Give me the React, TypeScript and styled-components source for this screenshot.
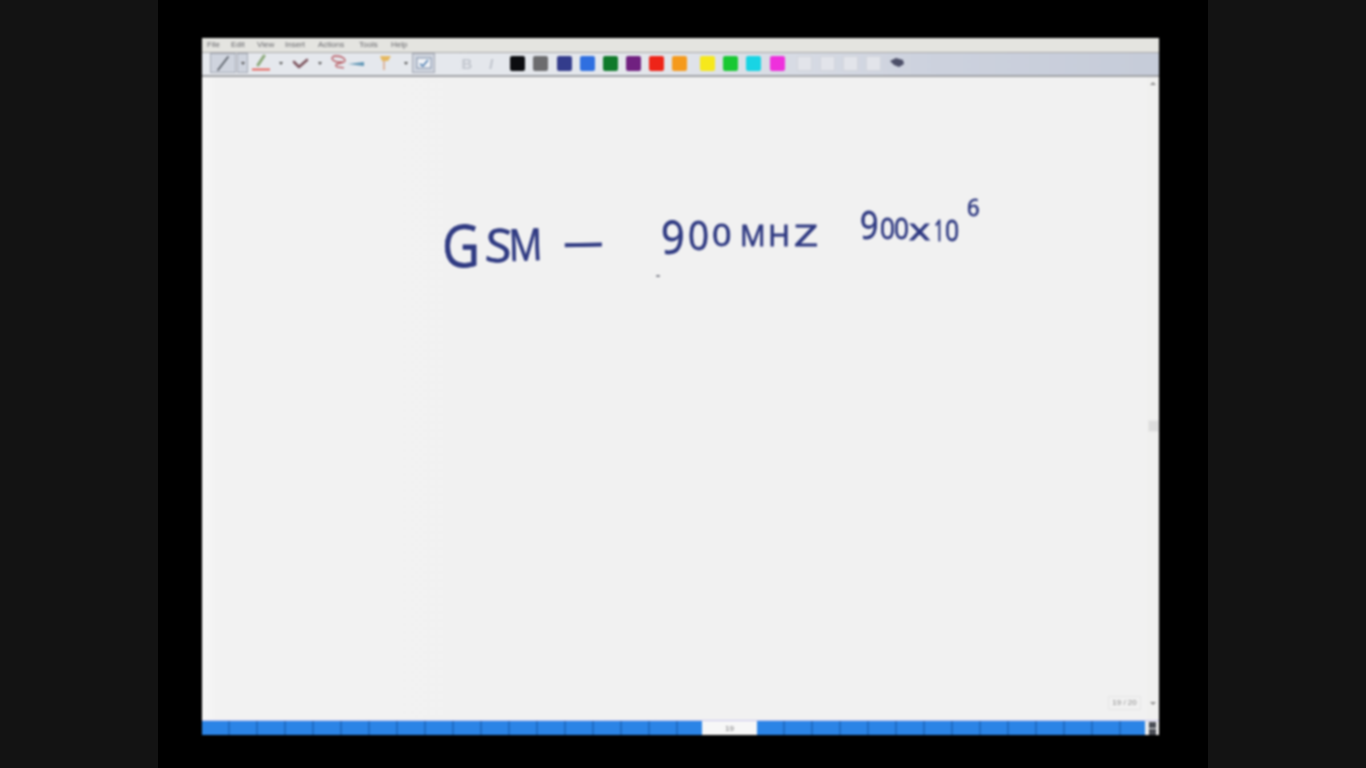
import styled, { createGlobalStyle } from 'styled-components';

const GlobalStyle = createGlobalStyle`
  html, body, #root {
    margin: 0;
    width: 1366px;
    height: 768px;
    overflow: hidden;
    background: #000;
  }
`;

const Screen = styled.div`
  width: 1366px;
  height: 768px;
  display: flex;
  font-family: 'Liberation Sans', Arial, sans-serif;
`;

const Pillar = styled.div`
  width: 158px;
  background: #131313;
`;

const Stage = styled.div`
  width: 1050px;
  padding: 38px 49px 33px 44px;
  box-sizing: border-box;
  background: #000;
  display: flex;
`;

const Window = styled.div`
  flex: 1;
  display: flex;
  flex-direction: column;
  background: #f1f1f1;
  filter: blur(0.8px);
`;

const MenuBar = styled.div`
  height: 13px;
  display: flex;
  align-items: center;
  padding: 0 0 1px 5px;
  box-sizing: content-box;
  gap: 8px;
  background: #e4e4e0;
  border-bottom: 1px solid #a9a9a9;
`;

const MenuItem = styled.span<{ $w: number }>`
  width: ${(p) => p.$w}px;
  font-size: 8px;
  color: #66666a;
`;

const Toolbar = styled.div`
  height: 20px;
  display: flex;
  align-items: center;
  padding: 0 0 2px 8px;
  background: linear-gradient(90deg, #e6e9ee 0%, #e4e7ec 45%, #cdd2de 75%, #c6ccd9 100%);
  border-bottom: 2px solid #a0a2a6;
`;

const ToolBox = styled.div<{ $w: number; $on?: boolean; $left?: number }>`
  width: ${(p) => p.$w}px;
  height: 20px;
  margin: 0 1px 0 ${(p) => p.$left ?? 0}px;
  display: flex;
  align-items: center;
  justify-content: center;
  box-sizing: border-box;
  border: 1px solid ${(p) => (p.$on ? '#a4a9b4' : 'transparent')};
  background: ${(p) => (p.$on ? '#cfd4de' : 'transparent')};
`;

const Caret = styled.span<{ $left?: number; $right?: number }>`
  width: 0;
  height: 0;
  margin: 0 ${(p) => p.$right ?? 0}px 0 ${(p) => p.$left ?? 0}px;
  border-left: 2px solid transparent;
  border-right: 2px solid transparent;
  border-top: 3px solid #555;
`;

const GhostLetter = styled.span<{ $italic?: boolean }>`
  width: 24px;
  font-size: 15px;
  font-weight: 700;
  font-style: ${(p) => (p.$italic ? 'italic' : 'normal')};
  text-align: center;
  color: #c2c6ce;
`;

const Ghosts = styled.div`
  display: flex;
  margin: 0 7px 0 19px;
`;

const Swatches = styled.div`
  display: flex;
  align-items: center;
`;

const Swatch = styled.div<{ $color: string; $gap: number }>`
  width: 15px;
  height: 15px;
  margin-right: ${(p) => p.$gap}px;
  border-radius: 2px;
  background: ${(p) => p.$color};
`;

const EmptySwatch = styled.div`
  width: 15px;
  height: 15px;
  margin-right: 8px;
  border: 1px solid #d2d5dc;
  box-sizing: border-box;
  background: #e2e4ea;
`;

const FlagSvg = styled.svg`
  margin-left: 8px;
`;

const Body = styled.div`
  flex: 1;
  display: flex;
  min-height: 0;
`;

const Canvas = styled.div`
  flex: 1;
  position: relative;
  background: linear-gradient(90deg, #f8f8f8 0, #f2f2f2 14px, #f1f1f1 100%);
`;

const Ink = styled.span<{ $x: number; $y: number; $size: number; $rot: number; $sx: number }>`
  position: absolute;
  left: ${(p) => p.$x}px;
  top: ${(p) => p.$y}px;
  font-family: 'Open Sans', sans-serif;
  font-size: ${(p) => p.$size}px;
  line-height: 1;
  color: #2f3a82;
  -webkit-text-stroke: 0.8px #2f3a82;
  transform-origin: 0 0;
  transform: rotate(${(p) => p.$rot}deg) scaleX(${(p) => p.$sx});
`;

const Speck = styled.div`
  position: absolute;
  left: 454px;
  top: 198px;
  width: 4px;
  height: 2px;
  border-radius: 1px;
  background: #80828c;
`;

const PageBadge = styled.div`
  position: absolute;
  right: 6px;
  bottom: 10px;
  width: 33px;
  height: 14px;
  border: 1px solid #e6e6e6;
  box-sizing: border-box;
  font-size: 8px;
  line-height: 12px;
  text-align: center;
  color: #8b8b8b;
`;

const Scroller = styled.div`
  width: 12px;
  display: flex;
  flex-direction: column;
  align-items: center;
  padding: 5px 0 15px;
  box-sizing: border-box;
  background: #f0f0ef;
`;

const ArrowUp = styled.span`
  width: 0;
  height: 0;
  border-left: 3px solid transparent;
  border-right: 3px solid transparent;
  border-bottom: 3px solid #8e8e8e;
`;

const ArrowDown = styled(ArrowUp)`
  margin-top: auto;
  border-bottom: 0;
  border-top: 3px solid #8e8e8e;
`;

const Thumb = styled.div`
  width: 11px;
  height: 12px;
  margin-top: 335px;
  background: #dcdcdc;
  border: 1px solid #e8e8e8;
  box-sizing: border-box;
`;

const SlideBar = styled.div`
  height: 14px;
  display: flex;
  border-top: 1px solid #c9c6ee;
`;

const Strip = styled.div<{ $w: number }>`
  width: ${(p) => p.$w}px;
  background: repeating-linear-gradient(90deg, #2b84e6 0, #2b84e6 26px, #1f6cc4 26px, #1f6cc4 28px);
`;

const SlideNumber = styled.div`
  width: 55px;
  background: #f7f7f7;
  font-size: 8px;
  line-height: 15px;
  text-align: center;
  color: #77777a;
`;

const NavButtons = styled.div`
  flex: 1;
  display: flex;
  flex-direction: column;
  align-items: center;
  background: #ececec;
`;

const NavButton = styled.div`
  width: 7px;
  height: 6px;
  margin-top: 1px;
  background: #4a4d55;
`;

const menus: [string, number][] = [
  ['File', 16],
  ['Edit', 18],
  ['View', 20],
  ['Insert', 25],
  ['Actions', 33],
  ['Tools', 24],
  ['Help', 20],
];

const colors: [string, number][] = [
  ['#0b0c10', 8],
  ['#6c6c6e', 9],
  ['#333c8c', 8],
  ['#2f6fe0', 8],
  ['#0f7a2a', 8],
  ['#702080', 8],
  ['#ee2418', 8],
  ['#f59a1c', 13],
  ['#f6e81c', 8],
  ['#18c832', 8],
  ['#18d4e4', 9],
  ['#ee30dc', 12],
];

// ink strokes: x/y relative to the canvas, rotation in degrees
const strokes: [string, number, number, number, number, number][] = [
  ['G', 240, 139, 58, 0, 0.9],
  ['S', 285, 143, 46, 4, 1.05],
  ['M', 306, 145, 44, -2, 0.85],
  ['—', 361, 141, 44, -1, 0.9],
  ['9', 459, 136, 46, 0, 0.9],
  ['0', 486, 138, 40, 0, 0.92],
  ['0', 510, 142, 31, 0, 1.1],
  ['M', 538, 143, 30, 0, 0.95],
  ['H', 566, 143, 30, 0, 1],
  ['Z', 592, 143, 30, 0, 1.4],
  ['9', 658, 128, 38, 0, 0.85],
  ['0', 678, 136, 29, 0, 0.9],
  ['0', 692, 136, 29, 0, 0.9],
  ['x', 707, 137, 30, 0, 1.35],
  ['1', 732, 138, 29, 0, 0.6],
  ['0', 743, 138, 29, 0, 0.85],
  ['6', 765, 119, 23, 0, 0.95],
];

function PenIcon() {
  return (
    <svg width="20" height="18" viewBox="0 0 20 18" fill="none">
      <path d="M5 16 L15 3" stroke="#5a6068" strokeWidth="1.8" strokeLinecap="round" />
    </svg>
  );
}

function MarkerIcon() {
  return (
    <svg width="24" height="18" viewBox="0 0 24 18" fill="none">
      <path d="M9 11 L15 2" stroke="#8aa878" strokeWidth="3" strokeLinecap="round" />
      <path d="M3 15.5 H21" stroke="#e8493c" strokeWidth="1.6" />
    </svg>
  );
}

function CheckStrokeIcon() {
  return (
    <svg width="24" height="16" viewBox="0 0 24 16" fill="none">
      <path d="M5 7 L10 12 L18 5" stroke="#7e5660" strokeWidth="2.6" strokeLinecap="round" strokeLinejoin="round" />
    </svg>
  );
}

function LassoIcon() {
  return (
    <svg width="40" height="20" viewBox="2 0 40 20" fill="none">
      <path d="M17 9 C5 10 3 3 10 3 C17 3 21 7 18 9 C14 11 9 10 10 13 C11 15 15 14 18 15" stroke="#b5525a" strokeWidth="1.3" />
      <path d="M22 11 L38 9 L38 13 Z" fill="#5d94b4" />
    </svg>
  );
}

function FlagIcon() {
  return (
    <FlagSvg width="20" height="20" viewBox="0 0 20 20" fill="none">
      <path d="M8 6 V17" stroke="#dcb49c" strokeWidth="2" />
      <path d="M4 3 H15 L12 8 H6 Z" fill="#e5b860" />
    </FlagSvg>
  );
}

function SnapIcon() {
  return (
    <svg width="18" height="16" viewBox="0 0 18 16" fill="none">
      <rect x="2" y="3" width="14" height="10" fill="#f1f3f7" stroke="#7e8fa8" />
      <path d="M5 9 L8 11 L13 5" stroke="#4e7eb0" strokeWidth="1.6" />
    </svg>
  );
}

function BlobIcon() {
  return (
    <svg width="18" height="14" viewBox="0 0 18 14" fill="none">
      <path d="M1 5 L7 2 L14 4 L15 8 L10 11 L5 9 Z" fill="#4c4f68" />
    </svg>
  );
}

function App() {
  return (
    <>
      <GlobalStyle />
      <Screen>
        <Pillar />
        <Stage>
          <Window>
            <MenuBar>
              {menus.map(([label, w]) => (
                <MenuItem key={label} $w={w}>
                  {label}
                </MenuItem>
              ))}
            </MenuBar>
            <Toolbar>
              <ToolBox $w={26} $on>
                <PenIcon />
              </ToolBox>
              <ToolBox $w={11} $on>
                <Caret />
              </ToolBox>
              <MarkerIcon />
              <Caret $left={6} $right={6} />
              <CheckStrokeIcon />
              <Caret $left={5} $right={6} />
              <LassoIcon />
              <FlagIcon />
              <Caret $left={8} $right={4} />
              <ToolBox $w={23} $on>
                <SnapIcon />
              </ToolBox>
              <Ghosts>
                <GhostLetter>B</GhostLetter>
                <GhostLetter $italic>I</GhostLetter>
              </Ghosts>
              <Swatches>
                {colors.map(([c, gap]) => (
                  <Swatch key={c} $color={c} $gap={gap} />
                ))}
                <EmptySwatch />
                <EmptySwatch />
                <EmptySwatch />
                <EmptySwatch />
                <BlobIcon />
              </Swatches>
            </Toolbar>
            <Body>
              <Canvas>
                {strokes.map(([c, x, y, size, rot, sx], i) => (
                  <Ink key={i} $x={x} $y={y} $size={size} $rot={rot} $sx={sx}>
                    {c}
                  </Ink>
                ))}
                <Speck />
                <PageBadge>19 / 20</PageBadge>
              </Canvas>
              <Scroller>
                <ArrowUp />
                <Thumb />
                <ArrowDown />
              </Scroller>
            </Body>
            <SlideBar>
              <Strip $w={500} />
              <SlideNumber>19</SlideNumber>
              <Strip $w={388} />
              <NavButtons>
                <NavButton />
                <NavButton />
              </NavButtons>
            </SlideBar>
          </Window>
        </Stage>
        <Pillar />
      </Screen>
    </>
  );
}

export default App;
